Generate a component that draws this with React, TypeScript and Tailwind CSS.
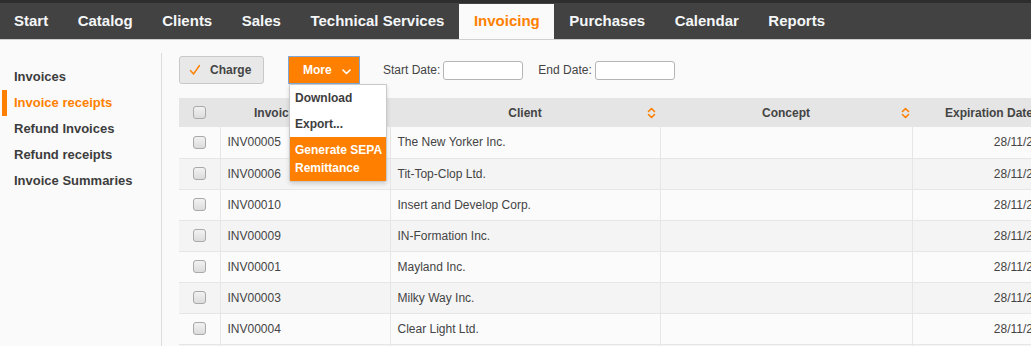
import React from 'react';

const navItems = ['Start', 'Catalog', 'Clients', 'Sales', 'Technical Services', 'Invoicing', 'Purchases', 'Calendar', 'Reports'];

const sideItems = ['Invoices', 'Invoice receipts', 'Refund Invoices', 'Refund receipts', 'Invoice Summaries'];

const rows = [
  { id: 'INV00005', client: 'The New Yorker Inc.' },
  { id: 'INV00006', client: 'Tit-Top-Clop Ltd.' },
  { id: 'INV00010', client: 'Insert and Develop Corp.' },
  { id: 'INV00009', client: 'IN-Formation Inc.' },
  { id: 'INV00001', client: 'Mayland Inc.' },
  { id: 'INV00003', client: 'Milky Way Inc.' },
  { id: 'INV00004', client: 'Clear Light Ltd.' },
  { id: 'INV00007', client: 'Blue Sky Corp.' },
];

const SortIcon = () => (
  <svg width="9" height="12" viewBox="0 0 9 12" fill="none" stroke="#ff8000" strokeWidth="1.6" strokeLinecap="round" strokeLinejoin="round">
    <path d="M1.5 4.5 L4.5 1.5 L7.5 4.5" />
    <path d="M1.5 7.5 L4.5 10.5 L7.5 7.5" />
  </svg>
);

const Checkbox = () => (
  <span className="inline-block w-[13px] h-[13px] rounded-[3px] border border-[#a9a9a9] bg-gradient-to-b from-[#f2f2f2] to-[#dcdcdc]" />
);

const App = () => {
  return (
    <div className="w-[1031px] h-[346px] overflow-hidden bg-[#fafafa] text-[#444] font-['Liberation_Sans',Arial,sans-serif]">
      {/* Top navigation */}
      <div className="h-[40px] bg-[#424242] border-t-[3px] border-[#2e2e2e] border-b border-b-[#d0d0d0] flex">
        {navItems.map((item) => (
          <div
            key={item}
            className={
              item === 'Invoicing'
                ? 'px-[14.75px] flex items-center bg-[#fafafa] text-[#ff8000] text-[15px] font-bold mt-px'
                : 'px-[14.75px] first:pl-[14px] flex items-center text-[#f4f6f8] text-[15px] font-bold'
            }
          >
            {item}
          </div>
        ))}
      </div>

      <div className="flex pt-[13px]">
        {/* Sidebar */}
        <div className="w-[162px] shrink-0 h-[300px] border-r border-[#dcdcdc] pt-[11px]">
          {sideItems.map((item) => (
            <div key={item} className="relative h-[26px] flex items-center pl-[14px] text-[13px] font-bold">
              {item === 'Invoice receipts' && <span className="absolute left-[2px] top-0 w-[5px] h-[26px] bg-[#ff8000]" />}
              <span className={item === 'Invoice receipts' ? 'text-[#ff8000]' : 'text-[#3d3d3d]'}>{item}</span>
            </div>
          ))}
        </div>

        {/* Main */}
        <div className="pl-[17px] min-w-0 flex-1">
          {/* Toolbar */}
          <div className="relative flex items-center h-[28px] mt-[3px]">
            <button className="w-[85px] h-[28px] flex items-center gap-[9px] pl-[9px] border border-[#c8c8c8] rounded-[3px] bg-[#e8e8e8] text-[12px] font-bold text-[#444]">
              <svg width="12" height="12" viewBox="0 0 12 12" fill="none" stroke="#ff8000" strokeWidth="1.4" strokeLinecap="round" strokeLinejoin="round">
                <path d="M1.5 6.5 L4.5 10 L10.5 1.5" />
              </svg>
              Charge
            </button>
            <div className="relative ml-[24px]">
              <button className="w-[72px] h-[28px] flex items-center pl-[14px] gap-[10px] border border-[#7ea8d8] bg-[#ff8000] text-[12px] font-bold text-white">
                More
                <svg width="9" height="6" viewBox="0 0 9 6" fill="none" stroke="#fff" strokeWidth="1.6" strokeLinecap="round" strokeLinejoin="round" className="mt-[3px]">
                  <path d="M1 1 L4.5 4.5 L8 1" />
                </svg>
              </button>
              {/* Dropdown menu */}
              <div className="absolute left-[1px] top-[28px] z-10 w-[98px] bg-white border border-[#c9c9c9] rounded-b-[3px] shadow-[0_2px_4px_rgba(0,0,0,0.15)] text-[12px] font-bold text-[#3d3d3d]">
                <div className="h-[26px] flex items-center px-[5px]">Download</div>
                <div className="h-[26px] flex items-center px-[5px]">Export...</div>
                <div className="bg-[#ff8000] text-white px-[5px] py-[4px] leading-[18px] whitespace-nowrap">
                  Generate SEPA
                  <br />
                  Remittance
                </div>
              </div>
            </div>
            <div className="flex items-center ml-[23px] text-[12px] text-[#444]">
              <span>Start Date:</span>
              <input className="ml-[3px] w-[80px] h-[19px] bg-white border border-[#b5b5b5] rounded-[3px]" />
              <span className="ml-[15px]">End Date:</span>
              <input className="ml-[3px] w-[80px] h-[19px] bg-white border border-[#b5b5b5] rounded-[3px]" />
            </div>
          </div>

          {/* Table */}
          <table className="mt-[14px] table-fixed border-collapse w-[893px] text-[12px]">
            <colgroup>
              <col className="w-[41px]" />
              <col className="w-[170px]" />
              <col className="w-[270px]" />
              <col className="w-[252px]" />
              <col className="w-[160px]" />
            </colgroup>
            <thead>
              <tr className="h-[29px] bg-[#e5e5e5] font-bold text-[#444]">
                <th className="text-center align-middle"><span className="flex justify-center"><Checkbox /></span></th>
                <th className="relative pr-[12px]">
                  <span>Invoice Number</span>
                  <span className="absolute right-[4px] top-[9px]"><SortIcon /></span>
                </th>
                <th className="relative">
                  <span>Client</span>
                  <span className="absolute right-[4px] top-[9px]"><SortIcon /></span>
                </th>
                <th className="relative">
                  <span>Concept</span>
                  <span className="absolute right-[2px] top-[9px]"><SortIcon /></span>
                </th>
                <th className="whitespace-nowrap pr-[6px]">Expiration Date</th>
              </tr>
            </thead>
            <tbody>
              {rows.map((row, i) => (
                <tr key={row.id} className={`h-[31px] border-b border-[#e6e6e6] ${i % 2 === 0 ? 'bg-[#fbfbfb]' : 'bg-[#f4f4f4]'}`}>
                  <td className="border-r border-[#e6e6e6]"><span className="flex justify-center"><Checkbox /></span></td>
                  <td className="border-r border-[#e6e6e6] pl-[7px] text-[#444]">{row.id}</td>
                  <td className="border-r border-[#e6e6e6] pl-[7px] text-[#444]">{row.client}</td>
                  <td className="border-r border-[#e6e6e6]"></td>
                  <td className="text-right pr-[19px] text-[#444]">28/11/2016</td>
                </tr>
              ))}
            </tbody>
          </table>
        </div>
      </div>
    </div>
  );
};

export default App;
